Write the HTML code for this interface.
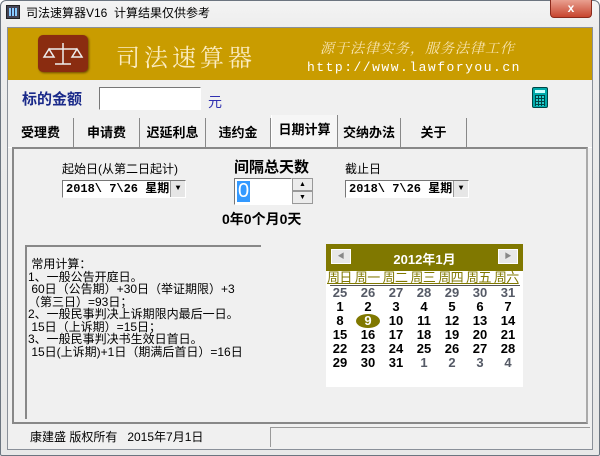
<!DOCTYPE html>
<html><head><meta charset="utf-8"><style>
*{margin:0;padding:0;box-sizing:border-box}
body{width:600px;height:456px;background:#fff;position:relative;overflow:hidden;font-family:"Liberation Sans","Noto Sans CJK SC",sans-serif;font-size:12px;color:#000}
.a{position:absolute}
.win{left:0;top:0;width:600px;height:456px;background:linear-gradient(#f4f4f4,#ececec 30px,#e8e8e8);border:1px solid #6c7580;border-radius:6px 6px 2px 2px}
.cli{left:7px;top:27px;width:586px;height:423px;background:#f0f0f0;border:1px solid #8a9099}
.banner{left:8px;top:28px;width:584px;height:52px;background:#c99c00}
.tab{top:118px;height:29px;border-right:1px solid #888;font-weight:bold;font-size:13px;text-align:center;line-height:29px;background:#f0f0f0}
.sel{background:#f6f6f6;border-left:1px solid #fff;top:115px;height:33px;line-height:30px}
.cal td{width:28px;text-align:center;font-weight:bold;font-size:13px;height:14px;line-height:14px;font-family:"Liberation Sans",sans-serif;padding:0}
.g{color:#555a66}
.sunk{border-top:1px solid #777;border-left:1px solid #777;border-right:1px solid #fff;border-bottom:1px solid #fff;background:#fff}
</style></head><body>
<div class="a win"></div>
<div class="a" style="left:6px;top:5px;width:14px;height:14px;background:#445;border:1px solid #222"><div style="margin:2px;height:8px;background:repeating-linear-gradient(90deg,#8cf 0 2px,#335 2px 3px)"></div></div>
<div class="a" style="left:26px;top:4px;font-size:12px">司法速算器V16&nbsp; 计算结果仅供参考</div>
<div class="a" style="left:550px;top:0;width:42px;height:18px;background:linear-gradient(#e9a090,#c7452f);border:1px solid #8b2a1c;border-top:none;border-radius:0 0 4px 4px;color:#fff;font-weight:bold;text-align:center;line-height:17px;font-size:12px">x</div>
<div class="a cli"></div>
<div class="a banner"></div>
<div class="a" style="left:38px;top:35px;width:50px;height:37px;background:#8a2c10;border-radius:5px;box-shadow:1px 1px 2px #6a4a00"></div>
<svg class="a" style="left:38px;top:35px" width="50" height="37"><g stroke="#eee" stroke-width="1.5" fill="none"><line x1="25" y1="8" x2="25" y2="29"/><line x1="11" y1="14" x2="39" y2="14"/><line x1="17" y1="29" x2="33" y2="29"/><path d="M11 14 L6 22 H16 Z M39 14 L34 22 H44 Z"/></g></svg>
<div class="a" style="left:116px;top:38px;font-size:24px;color:#fbecc0;letter-spacing:4px;font-family:'Noto Serif CJK SC',serif">司法速算器</div>
<div class="a" style="left:320px;top:38px;font-size:14px;color:#f8e4b0;letter-spacing:1px;font-family:'Noto Serif CJK SC',serif;font-style:italic">源于法律实务，服务法律工作</div>
<div class="a" style="left:307px;top:60px;font-size:13px;color:#fff;letter-spacing:1.5px;font-family:'Liberation Mono',monospace">http://www.lawforyou.cn</div>
<div class="a" style="left:22px;top:88px;font-size:15px;font-weight:bold;color:#1a2a8a">标的金额</div>
<div class="a sunk" style="left:99px;top:87px;width:102px;height:23px"></div>
<div class="a" style="left:208px;top:92px;font-size:14px;color:#3030b0">元</div>
<div class="a" style="left:532px;top:87px;width:16px;height:21px;background:#0aa;border:1px solid #044;border-radius:2px"><div style="margin:2px;height:3px;background:#cff"></div><div style="margin:0 2px;height:11px;background:repeating-linear-gradient(90deg,#044 0 1px,transparent 1px 3px),repeating-linear-gradient(#044 0 1px,#2cc 1px 3px)"></div></div>
<div class="a" style="left:8px;top:147px;width:584px;height:1px;background:#fff"></div>
<div class="a tab" style="left:8px;width:66px">受理费</div>
<div class="a tab" style="left:74px;width:66px">申请费</div>
<div class="a tab" style="left:140px;width:66px">迟延利息</div>
<div class="a tab" style="left:206px;width:65px">违约金</div>
<div class="a tab sel" style="left:271px;width:67px">日期计算</div>
<div class="a tab" style="left:338px;width:63px">交纳办法</div>
<div class="a tab" style="left:401px;width:66px">关于</div>
<div class="a" style="left:12px;top:147px;width:576px;height:277px;border:2px solid #888;border-right-color:#aaa;border-bottom-color:#888;background:#f0f0f0"></div>
<div class="a" style="left:62px;top:160px;font-size:12px">起始日(从第二日起计)</div>
<div class="a" style="left:234px;top:156px;font-size:15px;font-weight:bold">间隔总天数</div>
<div class="a" style="left:345px;top:160px;font-size:12px">截止日</div>
<div class="a sunk" style="left:62px;top:180px;width:124px;height:18px;font-weight:bold;font-size:12px;line-height:16px;padding-left:3px;font-family:'Liberation Mono','Noto Sans CJK SC',monospace">2018\ 7\26 星期<div class="a" style="right:0;top:0;width:15px;height:16px;background:#e6e6e6;border-left:1px solid #999;text-align:center;font-size:8px">▼</div></div>
<div class="a sunk" style="left:345px;top:180px;width:124px;height:18px;font-weight:bold;font-size:12px;line-height:16px;padding-left:3px;font-family:'Liberation Mono','Noto Sans CJK SC',monospace">2018\ 7\26 星期<div class="a" style="right:0;top:0;width:15px;height:16px;background:#e6e6e6;border-left:1px solid #999;text-align:center;font-size:8px">▼</div></div>
<div class="a sunk" style="left:234px;top:178px;width:58px;height:27px"><span style="display:inline-block;margin:2px 0 0 2px;background:#3399ff;color:#fff;font-size:20px;line-height:21px;padding:0 1px">0</span></div>
<div class="a" style="left:292px;top:178px;width:21px;height:13px;background:#ececec;border:1px solid #999;font-size:7px;text-align:center;line-height:11px">▲</div>
<div class="a" style="left:292px;top:191px;width:21px;height:13px;background:#ececec;border:1px solid #999;font-size:7px;text-align:center;line-height:11px">▼</div>
<div class="a" style="left:222px;top:209px;font-size:14px;font-weight:bold">0年0个月0天</div>
<div class="a" style="left:25px;top:245px;width:236px;height:174px;border-top:2px solid #888;border-left:2px solid #888;background:#f0f0f0"></div>
<div class="a" style="left:28px;top:258px;font-size:12px;line-height:12.5px;white-space:pre;font-family:'Liberation Sans','Noto Sans CJK SC',sans-serif"> 常用计算：
1、一般公告开庭日。
 60日（公告期）+30日（举证期限）+3
（第三日）=93日；
2、一般民事判决上诉期限内最后一日。
 15日（上诉期）=15日；
3、一般民事判决书生效日首日。
 15日(上诉期)+1日（期满后首日）=16日</div>
<div class="a" style="left:326px;top:244px;width:197px;height:143px;background:#fff"></div>
<div class="a" style="left:326px;top:244px;width:197px;height:27px;background:#807800"></div>
<div class="a" style="left:331px;top:249px;width:20px;height:15px;background:#e8e8e8;border:1px solid #fff;font-size:7px;color:#888;text-align:center;line-height:13px">◀</div>
<div class="a" style="left:498px;top:249px;width:20px;height:15px;background:#e8e8e8;border:1px solid #fff;font-size:7px;color:#888;text-align:center;line-height:13px">▶</div>
<div class="a" style="left:326px;top:249px;width:197px;text-align:center;color:#fff;font-weight:bold;font-size:13px">2012年1月</div>
<div class="a" style="left:327px;top:270px;width:195px;font-size:13px;line-height:15px;color:#807800;white-space:nowrap;text-decoration:underline;letter-spacing:-0.6px">周日 周一 周二 周三 周四 周五 周六</div>
<div class="a" style="left:330px;top:285px;width:190px;height:1px;background:#555"></div>
<table class="a cal" style="left:326px;top:286px;border-collapse:collapse">
<tr class="g"><td>25</td><td>26</td><td>27</td><td>28</td><td>29</td><td>30</td><td>31</td></tr>
<tr><td>1</td><td>2</td><td>3</td><td>4</td><td>5</td><td>6</td><td>7</td></tr>
<tr><td>8</td><td><span style="display:inline-block;width:24px;background:#807800;color:#fff;border-radius:50%">9</span></td><td>10</td><td>11</td><td>12</td><td>13</td><td>14</td></tr>
<tr><td>15</td><td>16</td><td>17</td><td>18</td><td>19</td><td>20</td><td>21</td></tr>
<tr><td>22</td><td>23</td><td>24</td><td>25</td><td>26</td><td>27</td><td>28</td></tr>
<tr><td>29</td><td>30</td><td>31</td><td class="g">1</td><td class="g">2</td><td class="g">3</td><td class="g">4</td></tr>
</table>
<div class="a" style="left:30px;top:428px;font-size:12px">康建盛 版权所有&nbsp;&nbsp; 2015年7月1日</div>
<div class="a" style="left:270px;top:427px;width:320px;height:20px;border-top:1px solid #999;border-left:1px solid #999"></div>
</body></html>
